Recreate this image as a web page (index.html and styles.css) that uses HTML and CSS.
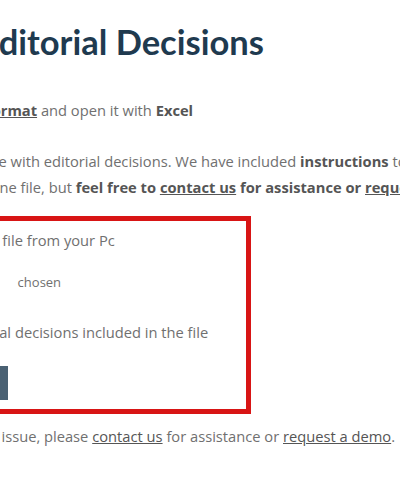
FILE: index.html
```html
<!DOCTYPE html>
<html lang="en">
<head>
  <meta charset="UTF-8" />
  <meta name="viewport" content="width=device-width, initial-scale=1.0"/>
  <title>Upload Editorial Decisions</title>
  <link rel="stylesheet" href="styles.css">
</head>
<body>
  <div class="page">
    <h1>Upload Editorial Decisions</h1>

    <ol class="steps">
      <li>Download as <a href="#"><strong>xlsx format</strong></a> and open it with <strong>Excel</strong></li>
      <li>Then fill the template with editorial decisions. We have included <strong>instructions</strong> to show you<br>how to add it all in one file, but <strong>feel free to <a href="#">contact us</a> for assistance or <a href="#">request a demo</a></strong></li>
    </ol>

    <form class="upload-box">
      <label class="field-label" for="file">Select the Excel file from your Pc</label>
      <label class="file-pick">
        <input type="file" id="file" class="file-input">
        <span class="file-btn">Choose File</span>
        <span class="file-name">No file <em class="file-state">chosen</em></span>
      </label>
      <label class="check"><input type="checkbox">I have editorial decisions included in the file</label>
      <button type="button" class="btn">Upload</button>
    </form>

    <p class="note">If you ever have any issue, please <a href="#">contact us</a> for assistance or <a href="#">request a demo</a>.</p>
  </div>
</body>
</html>
```

FILE: styles.css
```css
body {
  margin: 0;
  font-family: 'Open Sans', sans-serif;
  font-size: 14.7px;
  line-height: 26px;
  color: #707070;
  background: #fff;
  overflow: hidden;
}

.page {
  width: 900px;
  margin-left: -139px;
}

h1 {
  font-family: Lato, sans-serif;
  font-size: 34.5px;
  font-weight: 700;
  line-height: 1.2;
  color: #1f3a4f;
  margin: 21px 0 35px;
}

strong {
  color: #555;
  font-weight: 700;
}

a {
  color: #555;
  text-decoration: underline;
}

.steps {
  list-style: none;
  margin: 0;
  padding: 0;
}

.steps li {
  margin-bottom: 25px;
}

.steps li:last-child {
  margin-bottom: 0;
}

.upload-box {
  width: 333px;
  margin: 16px 0 9px 7px;
  padding: 6px 20px 9px;
  border: 5px solid #d81515;
}

.field-label,
.check {
  display: block;
}

.file-pick {
  display: flex;
  align-items: center;
  gap: 6px;
  margin: 16px 0 24px;
  font-size: 13px;
}

.file-input {
  display: none;
}

.file-btn {
  width: 60px;
  flex: none;
  white-space: nowrap;
  overflow: hidden;
}

.file-state {
  font-style: normal;
  margin-left: 16px;
}

.check input {
  margin: 0 4px 0 0;
  vertical-align: -2px;
}

.btn {
  display: block;
  margin-top: 21px;
  height: 34px;
  width: 115px;
  border: none;
  background: #4a6173;
  color: #fff;
  font: inherit;
}

.note {
  margin: 0;
}
```
